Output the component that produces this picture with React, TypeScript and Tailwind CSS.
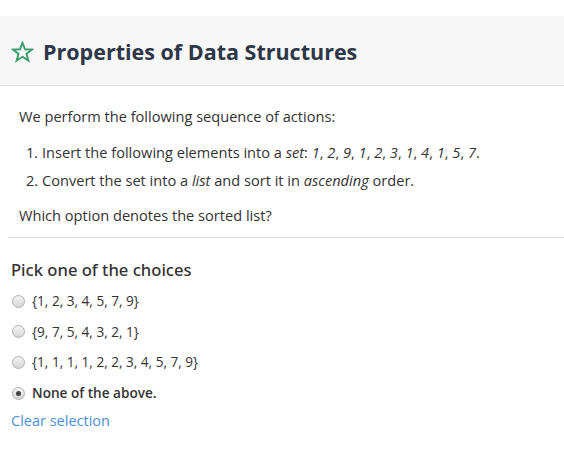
import React from "react";

const Radio = ({ checked }: { checked?: boolean }) => (
  <span className="relative inline-flex h-[13px] w-[13px] shrink-0 items-center justify-center rounded-full border border-[#b0b0b0] bg-gradient-to-b from-[#f4f4f4] to-[#d6d6d6]">
    {checked && <span className="h-[5px] w-[5px] rounded-full bg-[#444]" />}
  </span>
);

export default function App() {
  const options = [
    "{1, 2, 3, 4, 5, 7, 9}",
    "{9, 7, 5, 4, 3, 2, 1}",
    "{1, 1, 1, 1, 2, 2, 3, 4, 5, 7, 9}",
  ];
  return (
    <div className="min-h-[461px] bg-white pt-4 font-['Open_Sans',sans-serif] text-[#333]">
      <div className="flex h-[70px] items-center gap-[9px] border-b border-[#dcdcdc] bg-[#f7f7f7] pl-[11px] pt-[2px]">
        <svg width="23" height="22" viewBox="0 0 24 23" fill="none" stroke="#3a9b6c" strokeWidth="2" strokeLinejoin="miter">
          <path d="M12 1.8 L14.6 8.6 L21.9 8.9 L16.2 13.4 L18.1 20.5 L12 16.5 L5.9 20.5 L7.8 13.4 L2.1 8.9 L9.4 8.6 Z" />
        </svg>
        <h1 className="text-[21.5px] font-bold leading-none text-[#2d3748]">Properties of Data Structures</h1>
      </div>
      <div className="ml-[8px] border-b border-[#d9d9d9] pb-[12px] pl-[11px] pt-[20px] text-[14.6px] leading-[20px]">
        <p>We perform the following sequence of actions:</p>
        <ol className="mt-[16px] flex flex-col gap-[8px] pl-[7px]">
          <li>
            1. Insert the following elements into a <i>set</i>: <i>1</i>, <i>2</i>, <i>9</i>, <i>1</i>, <i>2</i>, <i>3</i>, <i>1</i>, <i>4</i>, <i>1</i>, <i>5</i>, <i>7</i>.
          </li>
          <li>
            2. Convert the set into a <i>list</i> and sort it in <i>ascending</i> order.
          </li>
        </ol>
        <p className="mt-[15px]">Which option denotes the sorted list?</p>
      </div>
      <div className="pl-[11px] pt-[22px]">
        <h2 className="font-['Noto_Sans',sans-serif] text-[16.6px] leading-[20px] font-medium text-[#333]">Pick one of the choices</h2>
        <div className="mt-[12px] flex flex-col gap-[12.7px]">
          {options.map((o) => (
            <label key={o} className="flex h-[18px] items-center gap-[7px] pl-[1px] text-[13.6px]">
              <Radio />
              <span>{o}</span>
            </label>
          ))}
          <label className="flex h-[18px] items-center gap-[7px] pl-[1px] text-[13.6px] font-semibold">
            <Radio checked />
            <span>None of the above.</span>
          </label>
        </div>
        <div className="mt-[8px] text-[14.5px] text-[#4a90d9]">Clear selection</div>
      </div>
    </div>
  );
}
